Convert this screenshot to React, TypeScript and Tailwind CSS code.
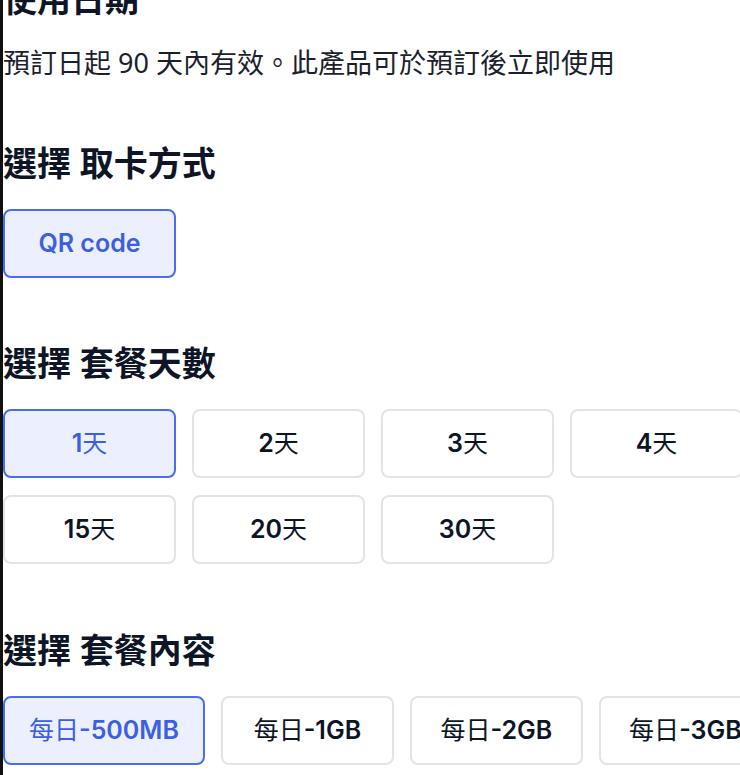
import React, { useState } from 'react';

const DAYS = ['1天', '2天', '3天', '4天', '15天', '20天', '30天'];
const PLANS = ['每日-500MB', '每日-1GB', '每日-2GB', '每日-3GB'];

// Latin parts of a label are set heavier than the CJK parts
const splitLabel = (label: string) =>
  label.split(/([A-Za-z0-9\- ]+)/).filter(Boolean).map((part, i) =>
    /[A-Za-z0-9]/.test(part) ? (
      <span key={i} className="font-semibold">{part}</span>
    ) : (
      <span key={i} className="font-normal">{part}</span>
    )
  );

interface OptionProps {
  label: string;
  active: boolean;
  onClick: () => void;
  className?: string;
}

const Option: React.FC<OptionProps> = ({ label, active, onClick, className = '' }) => (
  <button
    onClick={onClick}
    className={`h-[69px] px-6 rounded-lg border-2 text-[25px] flex items-center justify-center whitespace-nowrap ${
      active
        ? 'bg-[#ecf0fe] border-[#4a6cf0] text-[#3d5fe0]'
        : 'bg-white border-[#e4e4e4] text-[#0c1527]'
    } ${className}`}
    style={{ fontFamily: 'Inter, "Noto Sans CJK TC", sans-serif' }}
  >
    {splitLabel(label)}
  </button>
);

const Heading: React.FC<{ children: React.ReactNode; className?: string }> = ({ children, className = '' }) => (
  <h2 className={`text-[34px] leading-[48px] font-bold text-[#0d1526] ${className}`}>{children}</h2>
);

export default function App() {
  const [day, setDay] = useState('1天');
  const [plan, setPlan] = useState('每日-500MB');

  return (
    <div
      className="w-[740px] h-[775px] overflow-hidden bg-white border-l-[3px] border-[#111]"
      style={{ fontFamily: '"Noto Sans", "Noto Sans CJK TC", sans-serif' }}
    >
      <div className="w-[760px] -mt-[25px]">
        {/* 使用日期 */}
        <Heading>使用日期</Heading>
        <p className="mt-[20px] text-[27px] leading-[40px] text-[#1b1f2e]">
          預訂日起 90 天內有效。此產品可於預訂後立即使用
        </p>

        {/* 取卡方式 */}
        <Heading className="mt-[56px]">選擇 取卡方式</Heading>
        <div className="mt-[22px] flex">
          <Option label="QR code" active onClick={() => {}} className="w-[173px]" />
        </div>

        {/* 套餐天數 */}
        <Heading className="mt-[61px]">選擇 套餐天數</Heading>
        <div className="mt-[22px] grid grid-cols-[repeat(4,173px)] gap-x-[16px] gap-y-[17px]">
          {DAYS.map((d) => (
            <Option key={d} label={d} active={day === d} onClick={() => setDay(d)} />
          ))}
        </div>

        {/* 套餐內容 */}
        <Heading className="mt-[62px]">選擇 套餐內容</Heading>
        <div className="mt-[22px] flex gap-[16px]">
          {PLANS.map((p) => (
            <Option key={p} label={p} active={plan === p} onClick={() => setPlan(p)} className="min-w-[173px] shrink-0" />
          ))}
        </div>
      </div>
    </div>
  );
}
